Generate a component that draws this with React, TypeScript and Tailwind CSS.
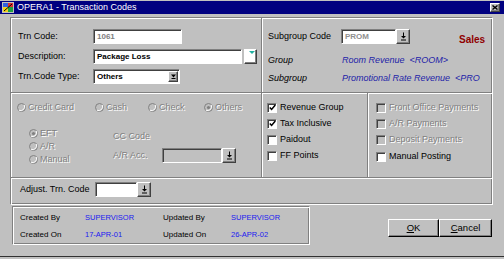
import type { ReactNode } from "react";

const sunken =
  "border border-t-[#808080] border-l-[#808080] border-b-white border-r-white shadow-[inset_1px_1px_0_#404040]";
const raised =
  "border border-t-white border-l-white border-b-[#404040] border-r-[#404040] shadow-[inset_-1px_-1px_0_#808080]";
const disabledText = "text-[#808080] [text-shadow:1px_1px_0_#fff]";

function AppIcon() {
  return (
    <svg width="12" height="11" viewBox="0 0 12 11">
      <rect x="0" y="0" width="12" height="11" fill="#c0c0c0" />
      <rect x="1" y="1" width="5" height="4" fill="#3060e0" />
      <rect x="6" y="1" width="5" height="4" fill="#e03030" />
      <rect x="1" y="5" width="5" height="5" fill="#f0d020" />
      <rect x="6" y="5" width="5" height="5" fill="#20a040" />
      <path d="M2 9 L10 2" stroke="#000" strokeWidth="1" />
    </svg>
  );
}

function CloseBox() {
  return (
    <div className={`ml-auto flex h-[9px] w-[10px] items-center justify-center bg-[#c0c0c0] ${raised}`}>
      <svg width="6" height="5" viewBox="0 0 6 5">
        <path d="M0.5 0.5 L5.5 4.5 M5.5 0.5 L0.5 4.5" stroke="#000" strokeWidth="1.4" />
      </svg>
    </div>
  );
}

function LovButton() {
  return (
    <div className={`flex h-[15px] w-[14px] shrink-0 items-center justify-center bg-[#c0c0c0] ${raised}`}>
      <svg width="7" height="9" viewBox="0 0 7 9">
        <path d="M3.5 0.5 V5" stroke="#000" strokeWidth="1" />
        <path d="M1 4 H6 L3.5 6.5 Z" fill="#000" />
        <path d="M1 8 H6" stroke="#000" strokeWidth="1" />
      </svg>
    </div>
  );
}

function Field({ width, children, gray }: { width: string; children?: ReactNode; gray?: boolean }) {
  return (
    <div
      className={`flex h-[15px] items-center overflow-hidden whitespace-nowrap pl-[3px] text-[8px] font-bold ${
        gray ? "bg-[#c0c0c0]" : "bg-white"
      } ${sunken} ${width}`}
    >
      {children}
    </div>
  );
}

function Radio({ label, checked, width }: { label: string; checked?: boolean; width?: string }) {
  return (
    <div className={`flex h-[12px] items-center ${width ?? ""}`}>
      <svg width="9" height="9" viewBox="0 0 9 9" className="shrink-0">
        <circle cx="4.5" cy="4.5" r="4" fill="#c0c0c0" stroke="#808080" strokeWidth="1" />
        <path d="M1.8 7.2 A4 4 0 0 0 7.2 1.8" stroke="#fff" strokeWidth="1" fill="none" />
        {checked && <circle cx="4.5" cy="4.5" r="1.6" fill="#808080" />}
      </svg>
      <span className={`ml-[2px] ${disabledText}`}>{label}</span>
    </div>
  );
}

function Check({ label, checked, disabled }: { label: string; checked?: boolean; disabled?: boolean }) {
  return (
    <div className="flex h-[13px] items-center">
      <div
        className={`flex h-[10px] w-[10px] shrink-0 items-center justify-center ${sunken} ${
          disabled ? "bg-[#c0c0c0]" : "bg-white"
        }`}
      >
        {checked && (
          <svg width="7" height="7" viewBox="0 0 7 7">
            <path d="M0.8 3.4 L2.6 5.4 L6.3 0.9" stroke="#000" strokeWidth="1.5" fill="none" />
          </svg>
        )}
      </div>
      <span className={`ml-[3px] ${disabled ? disabledText : "text-black"}`}>{label}</span>
    </div>
  );
}

function Button({ width, children }: { width: string; children: ReactNode }) {
  return (
    <div
      className={`flex h-[18px] items-center justify-center bg-[#c0c0c0] text-[9.5px] border border-t-white border-l-white border-b-black border-r-black shadow-[inset_-1px_-1px_0_#808080] ${width}`}
    >
      {children}
    </div>
  );
}

export default function App() {
  return (
    <div className="flex h-[259px] w-[504px] flex-col overflow-hidden bg-[#c0c0c0] font-['Liberation_Sans',Arial,sans-serif] text-[9px] leading-none text-black">
      {/* Title bar */}
      <div className="mt-[1px] flex h-[13px] items-center bg-[#000080] pl-[2px] pr-[4px]">
        <AppIcon />
        <span className="ml-[3px] text-[9px] text-white">OPERA1 - Transaction Codes</span>
        <CloseBox />
      </div>

      {/* Main panel */}
      <div className="ml-[10px] mt-[3px] flex h-[188px] w-[483px] flex-col border border-t-[#808080] border-l-[#808080] border-b-white border-r-white shadow-[inset_1px_1px_0_#fff,inset_-1px_-1px_0_#808080]">
        <div className="flex h-[159px]">
          {/* Left column */}
          <div className="flex w-[250px] flex-col">
            <div className="flex h-[74px] flex-col gap-[5px] pl-[7px] pt-[11px]">
              <div className="flex h-[15px] items-center">
                <span className="w-[75px]">Trn Code:</span>
                <Field width="w-[89px]">
                  <span className="text-[#808080]">1061</span>
                </Field>
              </div>
              <div className="flex h-[15px] items-center">
                <span className="w-[75px]">Description:</span>
                <Field width="w-[149px]">Package Loss</Field>
                <div className={`ml-[2px] flex h-[15px] w-[13px] items-start justify-end bg-white pr-[1px] pt-[1px] ${raised}`}>
                  <svg width="6" height="4" viewBox="0 0 6 4">
                    <path d="M0 0 L3 3 L6 0 Z" fill="#20b0a0" />
                  </svg>
                </div>
              </div>
              <div className="flex h-[15px] items-center">
                <span className="w-[75px]">Trn.Code Type:</span>
                <div className={`flex h-[15px] w-[87px] items-center bg-white pl-[3px] pr-[1px] text-[8px] font-bold ${sunken}`}>
                  <span>Others</span>
                  <div className={`ml-auto flex h-[11px] w-[10px] items-center justify-center bg-[#c0c0c0] ${raised}`}>
                    <svg width="5" height="5" viewBox="0 0 5 5">
                      <path d="M0 0.5 H5 L2.5 3.5 Z" fill="#000" />
                      <path d="M0.5 4.5 H4.5" stroke="#000" strokeWidth="1" />
                    </svg>
                  </div>
                </div>
              </div>
            </div>

            <div className="flex-1 border-t border-[#808080] pl-[6px] pt-[8px] shadow-[inset_0_1px_0_#fff]">
              <div className="flex">
                <Radio label="Credit Card" width="w-[78px]" />
                <Radio label="Cash" width="w-[53px]" />
                <Radio label="Check" width="w-[56px]" />
                <Radio label="Others" checked />
              </div>
              <div className="mt-[14px] flex">
                <div className="flex w-[96px] flex-col gap-[1px] pl-[12px]">
                  <Radio label="EFT" checked />
                  <Radio label="A/R" />
                  <Radio label="Manual" />
                </div>
                <div className="flex flex-col">
                  <div className={`mt-[2px] flex h-[15px] items-center ${disabledText}`}>CC Code</div>
                  <div className="mt-[4px] flex h-[15px] items-center">
                    <span className={`w-[49px] ${disabledText}`}>A/R Acc.</span>
                    <Field width="w-[60px]" gray />
                    <LovButton />
                  </div>
                </div>
              </div>
            </div>
          </div>

          {/* Right column */}
          <div className="flex flex-1 flex-col border-l border-[#808080] shadow-[inset_1px_0_0_#fff]">
            <div className="flex h-[74px] flex-col pl-[6px] pt-[11px]">
              <div className="flex h-[15px] items-center">
                <span className="w-[73px]">Subgroup Code</span>
                <Field width="w-[55px]">
                  <span className="text-[#909090]">PROM</span>
                </Field>
                <LovButton />
                <span className="ml-[49px] mt-[6px] text-[10px] font-bold text-[#900000]">Sales</span>
              </div>
              <div className="mt-[10px] flex h-[12px] items-center italic">
                <span className="w-[74px]">Group</span>
                <span className="text-[#2222a8]">Room Revenue</span>
                <span className="ml-[5px] text-[#2222a8]">&lt;ROOM&gt;</span>
              </div>
              <div className="mt-[6px] flex h-[12px] items-center italic">
                <span className="w-[74px]">Subgroup</span>
                <span className="whitespace-nowrap text-[#2222a8]">Promotional Rate Revenue</span>
                <span className="ml-[5px] text-[#2222a8]">&lt;PRO</span>
              </div>
            </div>

            <div className="flex flex-1 border-t border-[#808080] shadow-[inset_0_1px_0_#fff]">
              <div className="flex w-[105px] flex-col gap-[3px] pl-[5px] pt-[8px]">
                <Check label="Revenue Group" checked />
                <Check label="Tax Inclusive" checked />
                <Check label="Paidout" />
                <Check label="FF Points" />
              </div>
              <div className="flex flex-1 flex-col gap-[3px] border-l border-[#808080] pl-[8px] pt-[8px] shadow-[inset_1px_0_0_#fff]">
                <Check label="Front Office Payments" disabled />
                <Check label="A/R Payments" disabled />
                <Check label="Deposit Payments" disabled />
                <div className="mt-[1px]">
                  <Check label="Manual Posting" />
                </div>
              </div>
            </div>
          </div>
        </div>

        {/* Adjust row */}
        <div className="flex-1 border-t border-[#808080] pl-[9px] pt-[4px] shadow-[inset_0_1px_0_#fff]">
          <div className="flex h-[15px] items-center">
            <span className="w-[75px]">Adjust. Trn. Code</span>
            <Field width="w-[42px]" />
            <LovButton />
          </div>
        </div>
      </div>

      {/* Bottom: audit info and buttons */}
      <div className="ml-[12px] mt-[1px] flex">
        <div className="h-[39px] w-[298px] border border-t-[#808080] border-l-[#808080] border-b-white border-r-white pl-[7px] pt-[5px] text-[8px] shadow-[inset_1px_1px_0_#fff,inset_-1px_-1px_0_#808080]">
          <div className="flex h-[12px] items-center">
            <span className="w-[65px]">Created By</span>
            <span className="w-[78px] text-[7.5px] text-[#1a1af0]">SUPERVISOR</span>
            <span className="w-[68px]">Updated By</span>
            <span className="text-[7.5px] text-[#1a1af0]">SUPERVISOR</span>
          </div>
          <div className="mt-[5px] flex h-[12px] items-center">
            <span className="w-[65px]">Created On</span>
            <span className="w-[78px] text-[7.5px] text-[#1a1af0]">17-APR-01</span>
            <span className="w-[68px]">Updated On</span>
            <span className="text-[7.5px] text-[#1a1af0]">26-APR-02</span>
          </div>
        </div>
        <div className="ml-[78px] mt-[13px] flex">
          <Button width="w-[51px]">
            <span>
              <span className="underline">O</span>K
            </span>
          </Button>
          <Button width="w-[53px]">
            <span>
              <span className="underline">C</span>ancel
            </span>
          </Button>
        </div>
      </div>

      <div className="mb-[2px] mt-auto h-[1px] bg-[#303030]" />
    </div>
  );
}
